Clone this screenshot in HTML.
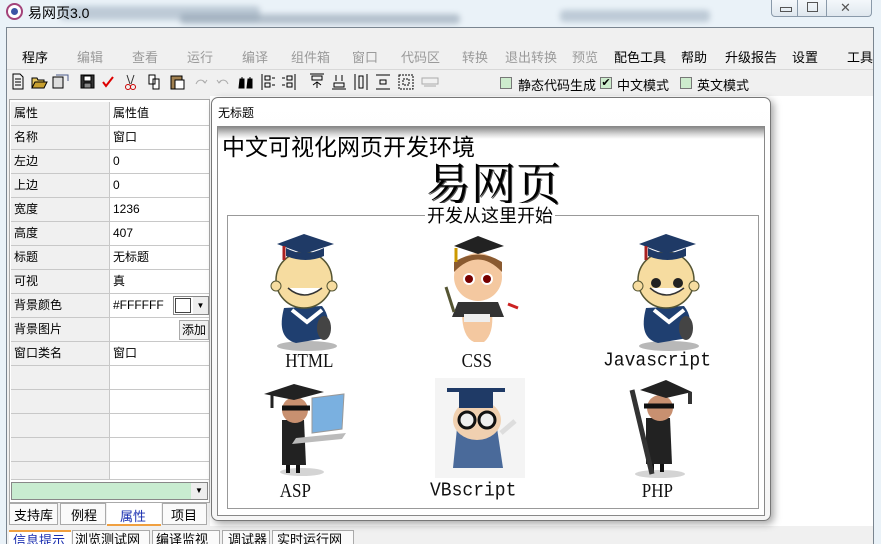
<!DOCTYPE html>
<html><head><meta charset="utf-8">
<style>
*{margin:0;padding:0;box-sizing:border-box}
body{width:881px;height:544px;overflow:hidden;position:relative;background:#eaf2f8;font-family:"Liberation Sans","Noto Sans CJK SC",sans-serif;font-size:12px;color:#000}
.a{position:absolute}
.blur{position:absolute;border-radius:4px;filter:blur(3px);opacity:.55}
.menu span{position:absolute;top:47px;font-size:13px;color:#9a9a9a}
.menu span.on{color:#000}
.grid div{position:absolute;height:24px;border-bottom:1px solid #c8c8c8;line-height:23px;padding-left:3px;font-size:12px}
.lbl{position:absolute;font-family:"Liberation Mono",monospace;font-size:18px;color:#111;transform:scaleY(1.1)}
.lbl.s{font-family:"Liberation Serif",serif;font-size:20px;transform:scaleX(.85)}
</style></head><body>
<div class="blur" style="left:60px;top:6px;width:200px;height:14px;background:#9ab"></div>
<div class="blur" style="left:180px;top:14px;width:280px;height:10px;background:#89a"></div>
<div class="blur" style="left:560px;top:10px;width:150px;height:12px;background:#9ab"></div>
<div class="a" style="left:6px;top:3px;width:17px;height:17px;border-radius:50%;background:#fff;border:2px solid #a3437a"><div class="a" style="left:3px;top:3px;width:7px;height:7px;border-radius:50%;background:#3b55a6"></div></div>
<div class="a" style="left:28px;top:3px;font-size:14px">易网页3.0</div>
<div class="a" style="left:771px;top:0;width:101px;height:17px;border:1px solid #8a9aaa;border-top:none;border-radius:0 0 4px 4px;background:linear-gradient(#f4f8fb,#dfe7ee)"></div>
<div class="a" style="left:797px;top:0;width:1px;height:17px;background:#8a9aaa"></div>
<div class="a" style="left:826px;top:0;width:1px;height:17px;background:#8a9aaa"></div>
<div class="a" style="left:780px;top:7px;width:12px;height:5px;border:1px solid #555"></div>
<div class="a" style="left:807px;top:2px;width:11px;height:10px;border:1px solid #555"></div>
<div class="a" style="left:840px;top:0;font-size:13px;color:#555">✕</div>
<div class="a" style="left:6px;top:27px;width:868px;height:517px;background:#f0f0f0;border:1px solid #7a8590;border-bottom:none"></div>
<div class="menu">
<span class="on" style="left:22px">程序</span><span style="left:77px">编辑</span><span style="left:132px">查看</span><span style="left:187px">运行</span><span style="left:242px">编译</span><span style="left:291px">组件箱</span><span style="left:352px">窗口</span><span style="left:401px">代码区</span><span style="left:462px">转换</span><span style="left:505px">退出转换</span><span style="left:572px">预览</span><span class="on" style="left:614px">配色工具</span><span class="on" style="left:681px">帮助</span><span class="on" style="left:725px">升级报告</span><span class="on" style="left:792px">设置</span><span class="on" style="left:847px">工具</span>
</div>
<div class="a" style="left:7px;top:69px;width:866px;height:1px;background:#d8d8d8"></div>
<svg class="a" style="left:10px;top:73px" width="440" height="18" viewBox="0 0 440 18" fill="none" stroke="#000" stroke-width="1">
<path d="M3 1h7l3 3v12H3z M5 6h6 M5 9h6 M5 12h6"/>
<path d="M22 5h5l1 2h6v8H22z" fill="#e8c860"/><path d="M22 15l3-6h12l-3 6z" fill="#c8a030"/>
<path d="M43 4h10v11H43z" fill="#ddd"/><path d="M46 2h12v6" stroke="#4a5a8a"/>
<rect x="71" y="2" width="13" height="13" fill="#333"/><rect x="74" y="3" width="7" height="5" fill="#fff"/><rect x="74" y="10" width="7" height="5" fill="#888"/>
<path d="M93 9l3 4 7-9" stroke="#d00" stroke-width="2"/>
<path d="M117 2l3 9 M124 2l-3 9" stroke="#333"/><circle cx="118" cy="14" r="2.5" stroke="#c00"/><circle cx="123" cy="14" r="2.5" stroke="#c00"/>
<path d="M139 2h6v9h-6z M143 6h6v10h-6z" fill="#fff"/>
<path d="M161 3h11v13h-11z" fill="#a08050"/><path d="M165 7h9v9h-9z" fill="#fff"/>
<path d="M186 11c2-5 7-5 9-1 M193 8l2 2 2-3" stroke="#aaa"/>
<path d="M218 11c-2-5-7-5-9-1 M211 8l-2 2-2-3" stroke="#aaa"/>
<path d="M230 6h4v9h-5z M238 6h4v9h-5z M232 4v2 M240 4v2" fill="#000"/>
<path d="M252 1v16 M255 3h5v4h-5z M255 10h5v4h-5z M262 5h3 M262 12h3" />
<path d="M285 1v16 M277 3h5v4h-5z M277 10h5v4h-5z M272 5h3 M272 12h3"/>
<path d="M300 1h14 M302 3h10v4h-10z M307 9v6 M303 12l4-3 4 3"/>
<path d="M322 16h14 M324 10h10v4h-10z M326 2v6 M332 2v6"/>
<path d="M345 1v16 M357 1v16 M349 3h4v12h-4z"/>
<path d="M366 2h14 M366 16h14 M370 7h6v4h-6z"/>
<path d="M389 2h14v14h-14z M393 6h6v6h-6z" stroke-dasharray="2 1"/>
<path d="M412 5h16v6h-16z M414 13h12" stroke="#aaa"/>
</svg>
<div class="a" style="left:500px;top:77px;width:12px;height:12px;border:1px solid #777;background:#cdeccd"></div>
<div class="a" style="left:518px;top:75px;font-size:13px">静态代码生成</div>
<div class="a" style="left:600px;top:77px;width:12px;height:12px;border:1px solid #777;background:#cdeccd;font-size:11px;line-height:10px;text-align:center">✔</div>
<div class="a" style="left:617px;top:75px;font-size:13px">中文模式</div>
<div class="a" style="left:680px;top:77px;width:12px;height:12px;border:1px solid #777;background:#cdeccd"></div>
<div class="a" style="left:697px;top:75px;font-size:13px">英文模式</div>
<div class="a" style="left:9px;top:99px;width:201px;height:404px;border:1px solid #aaa;background:#fff"></div>
<div class="a" style="left:11px;top:102px;width:98px;height:378px;background:#f0f0f0"></div>
<div class="a" style="left:109px;top:102px;width:1px;height:378px;background:#c8c8c8"></div>
<div class="grid">
<div style="left:11px;top:102px;width:198px"></div>
<div style="left:11px;top:102px">属性</div><div style="left:110px;top:102px">属性值</div>
<div style="left:11px;top:126px;width:198px">名称</div><div style="left:110px;top:126px;border:none">窗口</div>
<div style="left:11px;top:150px;width:198px">左边</div><div style="left:110px;top:150px;border:none">0</div>
<div style="left:11px;top:174px;width:198px">上边</div><div style="left:110px;top:174px;border:none">0</div>
<div style="left:11px;top:198px;width:198px">宽度</div><div style="left:110px;top:198px;border:none">1236</div>
<div style="left:11px;top:222px;width:198px">高度</div><div style="left:110px;top:222px;border:none">407</div>
<div style="left:11px;top:246px;width:198px">标题</div><div style="left:110px;top:246px;border:none">无标题</div>
<div style="left:11px;top:270px;width:198px">可视</div><div style="left:110px;top:270px;border:none">真</div>
<div style="left:11px;top:294px;width:198px">背景颜色</div><div style="left:110px;top:294px;border:none">#FFFFFF</div>
<div style="left:11px;top:318px;width:198px">背景图片</div>
<div style="left:11px;top:342px;width:198px">窗口类名</div><div style="left:110px;top:342px;border:none">窗口</div>
<div style="left:11px;top:366px;width:198px"></div>
<div style="left:11px;top:390px;width:198px"></div>
<div style="left:11px;top:414px;width:198px"></div>
<div style="left:11px;top:438px;width:198px"></div>
<div style="left:11px;top:462px;width:198px;height:18px"></div>
</div>
<div class="a" style="left:173px;top:296px;width:36px;height:19px;border:1px solid #888;background:#fff"></div>
<div class="a" style="left:175px;top:298px;width:16px;height:15px;border:1px solid #444"></div>
<div class="a" style="left:193px;top:297px;width:15px;height:17px;background:#eee;font-size:8px;text-align:center;line-height:17px">▼</div>
<div class="a" style="left:179px;top:320px;width:30px;height:20px;border:1px solid #aaa;background:#f0f0f0;font-size:12px;line-height:19px;padding-left:2px">添加</div>
<div class="a" style="left:11px;top:482px;width:197px;height:18px;border:1px solid #888;background:#c8ecd0"></div>
<div class="a" style="left:191px;top:483px;width:16px;height:16px;background:#eee;font-size:8px;text-align:center;line-height:16px">▼</div>
<div class="a" style="left:9px;top:503px;width:49px;height:22px;border:1px solid #aaa;background:#fafafa;font-size:13px;padding:1px 0 0 4px">支持库</div>
<div class="a" style="left:60px;top:503px;width:46px;height:22px;border:1px solid #aaa;background:#fafafa;font-size:13px;padding:1px 0 0 10px">例程</div>
<div class="a" style="left:107px;top:503px;width:54px;height:23px;background:#fff;border-bottom:2px solid #f0a040;font-size:13px;color:#1a2fb0;padding:3px 0 0 13px">属性</div>
<div class="a" style="left:162px;top:503px;width:45px;height:22px;border:1px solid #aaa;background:#fafafa;font-size:13px;padding:1px 0 0 8px">项目</div>
<div class="a" style="left:9px;top:530px;width:62px;height:14px;background:#fff;border-top:2px solid #f0a040;font-size:13px;color:#1a2fb0;padding-left:4px;overflow:hidden;line-height:17px">信息提示</div>
<div class="a" style="left:72px;top:530px;width:78px;height:14px;border:1px solid #aaa;border-bottom:none;background:#fafafa;font-size:13px;padding-left:2px;overflow:hidden;line-height:17px">浏览测试网页</div>
<div class="a" style="left:152px;top:530px;width:68px;height:14px;border:1px solid #aaa;border-bottom:none;background:#fafafa;font-size:13px;padding-left:3px;overflow:hidden;line-height:17px">编译监视器</div>
<div class="a" style="left:222px;top:530px;width:48px;height:14px;border:1px solid #aaa;border-bottom:none;background:#fafafa;font-size:13px;padding-left:5px;overflow:hidden;line-height:17px">调试器</div>
<div class="a" style="left:272px;top:530px;width:82px;height:14px;border:1px solid #aaa;border-bottom:none;background:#fafafa;font-size:13px;padding-left:4px;overflow:hidden;line-height:17px">实时运行网页</div>
<div class="a" style="left:210px;top:96px;width:663px;height:430px;background:#fff"></div>
<div class="a" style="left:211px;top:97px;width:560px;height:424px;border:1px solid #777;border-radius:7px;background:linear-gradient(#fff,#f6f6f6);box-shadow:3px 3px 8px rgba(0,0,0,.35)"></div>
<div class="a" style="left:218px;top:104px;font-size:12px">无标题</div>
<div class="a" style="left:217px;top:126px;width:548px;height:390px;border:1px solid #888;background:#fff"></div>
<div class="a" style="left:218px;top:127px;width:546px;height:12px;background:linear-gradient(#8a8a8a,#d8d8d8 60%,#fff)"></div>
<div class="a" style="left:222px;top:131px;font-size:23px;font-family:'Noto Sans CJK SC',sans-serif;line-height:28px">中文可视化网页开发环境</div>
<div class="a" style="left:426px;top:154px;font-size:45px;font-family:'Noto Serif CJK SC',serif;line-height:54px;text-shadow:1px 1px 0 #555">易网页</div>
<div class="a" style="left:227px;top:215px;width:532px;height:294px;border:1px solid #999"></div>
<div class="a" style="left:425px;top:203px;padding:0 2px;background:#fff;font-size:18px;font-family:'Noto Sans CJK SC',sans-serif;line-height:24px">开发从这里开始</div>
<svg width="0" height="0" style="position:absolute"><defs>
<g id="baby">
<ellipse cx="45" cy="118" rx="30" ry="5" fill="#888" opacity=".6"/>
<path d="M22 80 q-8 30 12 35 l30 -5 q6-20-4-32z" fill="#1f3f70"/>
<path d="M30 82 l15 12 15-12" stroke="#fff" stroke-width="4" fill="none"/>
<ellipse cx="62" cy="100" rx="7" ry="12" fill="#444"/>
<circle cx="42" cy="52" r="28" fill="#f6dca0" stroke="#553" stroke-width="1.5"/>
<circle cx="14" cy="58" r="5" fill="#f6dca0" stroke="#553"/><circle cx="70" cy="58" r="5" fill="#f6dca0" stroke="#553"/>
<path d="M15 16 l27-10 30 10 -30 10z" fill="#1f3a66"/><path d="M24 20 q18 10 38 0 v8 q-18 8-38 0z" fill="#1f3a66"/>
<path d="M22 18 v14" stroke="#a22" stroke-width="3"/>
<path d="M26 60 q16 14 34 0" stroke="#333" stroke-width="1.5" fill="#fff"/>
</g>
</defs></svg>
<svg class="a" style="left:262px;top:228px" width="90" height="125" viewBox="0 0 90 125"><use href="#baby"/></svg>
<svg class="a" style="left:624px;top:228px" width="90" height="125" viewBox="0 0 90 125"><use href="#baby"/><circle cx="32" cy="55" r="5" fill="#222"/><circle cx="54" cy="55" r="5" fill="#222"/></svg>
<svg class="a" style="left:432px;top:232px" width="90" height="115" viewBox="0 0 90 115">
<path d="M30 80 q0 25 12 30 h10 q10-8 8-30z" fill="#f4c8a0"/>
<path d="M26 70 h40 l6 15 h-52z" fill="#333"/><path d="M32 82 h26 v8 h-26z" fill="#eee"/>
<circle cx="46" cy="45" r="24" fill="#f4c8a0"/><path d="M22 40 q24-25 48 0 v-10 q-24-15-48 0z" fill="#8a5a30"/>
<circle cx="37" cy="47" r="6" fill="#fff"/><circle cx="55" cy="47" r="6" fill="#fff"/><circle cx="37" cy="47" r="4" fill="#700"/><circle cx="55" cy="47" r="4" fill="#700"/>
<path d="M22 14 l24-10 26 10 -26 8z" fill="#222"/><path d="M24 16 v14" stroke="#c90" stroke-width="3"/>
<path d="M14 55 l8 25" stroke="#553" stroke-width="3"/><path d="M76 72 l10 4" stroke="#c22" stroke-width="3"/>
</svg>
<svg class="a" style="left:262px;top:380px" width="90" height="100" viewBox="0 0 90 100">
<ellipse cx="40" cy="92" rx="22" ry="4" fill="#aaa" opacity=".5"/>
<path d="M20 40 h22 l2 45 h-24z" fill="#222"/><path d="M26 85 v8 M36 85 v8" stroke="#111" stroke-width="4"/>
<circle cx="33" cy="30" r="13" fill="#c89070"/><path d="M20 28 h28" stroke="#111" stroke-width="5"/>
<path d="M2 14 l30-10 30 8 -30 8z" fill="#222"/><path d="M10 14 v14" stroke="#222" stroke-width="3"/>
<path d="M50 18 l32-4 -2 35 -30 4z" fill="#7ab0e0" stroke="#999"/><path d="M34 58 l50-5 -4 6 -50 5z" fill="#bbb"/>
</svg>
<svg class="a" style="left:435px;top:378px" width="90" height="100" viewBox="0 0 90 100">
<rect x="0" y="0" width="90" height="100" fill="#f4f4f4"/>
<path d="M22 50 h40 l6 40 h-50z" fill="#4a6a9a"/>
<ellipse cx="42" cy="42" rx="24" ry="20" fill="#f0d0b0"/>
<rect x="24" y="12" width="34" height="18" fill="#1f3a66"/><path d="M12 12 h58" stroke="#1f3a66" stroke-width="4"/>
<circle cx="32" cy="42" r="8" fill="#eee" stroke="#111" stroke-width="3"/><circle cx="52" cy="42" r="8" fill="#eee" stroke="#111" stroke-width="3"/>
<path d="M66 55 l14-12" stroke="#ddd" stroke-width="5"/>
</svg>
<svg class="a" style="left:620px;top:378px" width="90" height="102" viewBox="0 0 90 102">
<ellipse cx="40" cy="96" rx="25" ry="4" fill="#aaa" opacity=".5"/>
<path d="M26 40 h24 l2 46 h-26z" fill="#222"/><path d="M32 86 v8 M42 86 v8" stroke="#111" stroke-width="4"/>
<circle cx="40" cy="30" r="13" fill="#c89070"/><path d="M24 28 h30" stroke="#111" stroke-width="5"/>
<path d="M20 12 l26-10 26 12 -26 6z" fill="#222"/><path d="M70 14 v12" stroke="#333" stroke-width="4"/>
<path d="M12 12 l20 84" stroke="#333" stroke-width="5"/>
</svg>
<div class="lbl s" style="left:281px;top:350px">HTML</div>
<div class="lbl s" style="left:459px;top:350px">CSS</div>
<div class="lbl" style="left:603px;top:351px">Javascript</div>
<div class="lbl s" style="left:277px;top:480px">ASP</div>
<div class="lbl" style="left:430px;top:481px">VBscript</div>
<div class="lbl s" style="left:639px;top:480px">PHP</div>
</body></html>
